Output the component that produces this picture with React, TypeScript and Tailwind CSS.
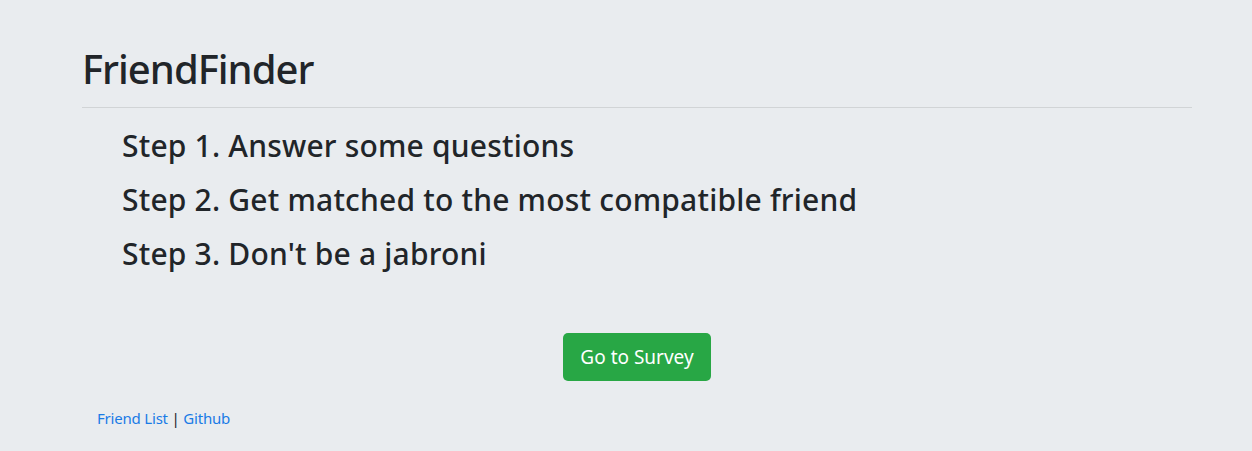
import React from "react";

export default function App() {
  return (
    <div
      className="min-h-screen w-full bg-[#e9ecef] text-[#212529]"
      style={{ fontFamily: '"Noto Sans", "Open Sans", sans-serif' }}
    >
      <div className="ml-[82px] w-[1110px] pt-[45px]">
        <h1 className="text-[40px] leading-[48px] font-medium tracking-[-1px]">FriendFinder</h1>
        <hr className="mt-[14px] border-0 border-t border-[rgba(0,0,0,0.1)]" />
        <ul className="mt-[11px] pl-[40px]">
          <li className="text-[30px] leading-[54px] font-medium tracking-[0.2px]">Step 1. Answer some questions</li>
          <li className="text-[30px] leading-[54px] font-medium tracking-[0.2px]">Step 2. Get matched to the most compatible friend</li>
          <li className="text-[30px] leading-[54px] font-medium tracking-[0.2px]">Step 3. Don't be a jabroni</li>
        </ul>
        <div className="mt-[52px] flex justify-center">
          <a
            href="#"
            className="inline-flex h-[48px] w-[148px] items-center justify-center rounded-[5px] bg-[#28a745] text-[19px] text-white"
          >
            Go to Survey
          </a>
        </div>
        <p className="mt-[25px] pl-[15px] text-[15px] leading-[24px] tracking-[-0.2px]">
          <a href="#" className="text-[#1a7be6]">Friend List</a> |{" "}
          <a href="#" className="text-[#1a7be6]">Github</a>
        </p>
      </div>
    </div>
  );
}
